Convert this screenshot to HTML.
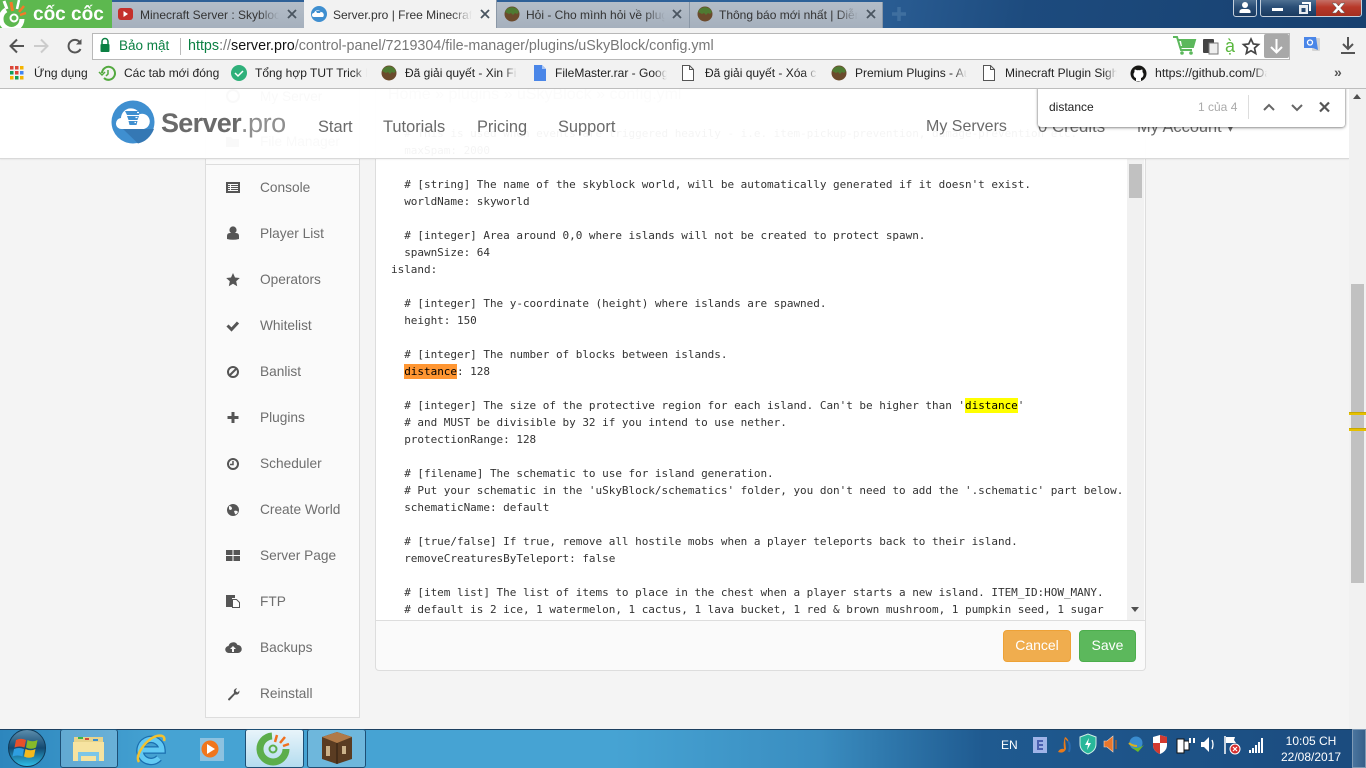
<!DOCTYPE html>
<html lang="vi"><head><meta charset="utf-8"><title>Server.pro</title>
<style>
html,body{margin:0;padding:0;width:1366px;height:768px;overflow:hidden;background:#f4f4f4;font-family:"Liberation Sans","Noto Sans CJK SC",sans-serif;color:#333}
.a,.t{position:absolute}
.t{white-space:nowrap;line-height:16px}
.tab{position:absolute;top:2px;height:26px;width:193px;background:linear-gradient(#b4bdc8,#a5b0bd);border-right:1px solid #8a97a6;box-sizing:border-box}
.tab.on{background:#f2f2f2;top:0;height:28px}
.tt{position:absolute;top:5px;height:16px;width:139px;font-size:12px;line-height:16px;white-space:nowrap;overflow:hidden;color:#333;-webkit-mask-image:linear-gradient(90deg,#000 85%,transparent);mask-image:linear-gradient(90deg,#000 85%,transparent)}
.bm{position:absolute;top:65px;height:16px;width:112px;font-size:12px;line-height:16px;white-space:nowrap;overflow:hidden;color:#222;-webkit-mask-image:linear-gradient(90deg,#000 88%,transparent);mask-image:linear-gradient(90deg,#000 88%,transparent)}
.si{position:absolute;left:260px;margin-top:1px;font-size:13.700px;line-height:18px;color:#6e6e6e;white-space:nowrap}
.nav{position:absolute;top:116px;font-size:16.400px;line-height:20px;color:#6a6a6a;white-space:nowrap}
pre{position:absolute;left:391px;top:125px;margin:0;width:736px;height:495px;overflow:hidden;font:11px/17px "DejaVu Sans Mono",monospace;letter-spacing:-.025px;color:#333}
svg{position:absolute;overflow:visible}
</style></head><body>

<!-- page layer -->
<div class="a" style="left:0;top:89px;width:1366px;height:640px;background:#f4f4f4"></div>
<!-- sidebar -->
<div class="a" style="left:205px;top:80px;width:155px;height:638px;background:#fafafa;border:1px solid #ddd;box-sizing:border-box"></div>
<div class="a" style="left:205px;top:164px;width:155px;height:1px;background:#ddd"></div>
<div class="si" style="top:87px;color:#888">My Server</div>
<div class="si" style="top:132px;color:#888">File Manager</div>
<div class="si" style="top:178px">Console</div>
<div class="si" style="top:224px">Player List</div>
<div class="si" style="top:270px">Operators</div>
<div class="si" style="top:316px">Whitelist</div>
<div class="si" style="top:362px">Banlist</div>
<div class="si" style="top:408px">Plugins</div>
<div class="si" style="top:454px">Scheduler</div>
<div class="si" style="top:500px">Create World</div>
<div class="si" style="top:546px">Server Page</div>
<div class="si" style="top:592px">FTP</div>
<div class="si" style="top:638px">Backups</div>
<div class="si" style="top:684px">Reinstall</div>
<svg width="1366" height="768" style="left:0;top:0" fill="#555">
<circle cx="233" cy="96" r="6" fill="none" stroke="#888" stroke-width="2"/>
<path d="M226 137h5l2 2h6v8h-13z" fill="#888"/>
<path d="M226 182h14v11h-14z"/><path d="M228 184h10v7h-10z" fill="#fafafa"/><path d="M228 185h2v1h-2zM231 185h7v1h-7zM228 187h2v1h-2zM231 187h7v1h-7zM228 189h2v1h-2zM231 189h7v1h-7z"/>
<circle cx="233" cy="230" r="3.600"/><path d="M227 239v-3q0-3 3-3h6q3 0 3 3v3q-6 1.500-12 0z"/>
<path d="M233 273l2 4.500 4.800.5-3.600 3.300 1 4.900-4.200-2.500-4.200 2.500 1-4.900-3.600-3.300 4.800-.5z"/>
<path d="M227.500 325.500l4 4 6.500-7" fill="none" stroke="#555" stroke-width="3"/>
<circle cx="233" cy="372" r="5" fill="none" stroke="#555" stroke-width="2"/><path d="M229.500 375.500l7-7" stroke="#555" stroke-width="2"/>
<path d="M231.500 412h3v4h4v3h-4v4h-3v-4h-4v-3h4z"/>
<circle cx="233" cy="464" r="5" fill="none" stroke="#555" stroke-width="2"/><path d="M233 461v3.500h-3" fill="none" stroke="#555" stroke-width="1.500"/>
<circle cx="233" cy="510" r="6"/><path d="M229 506q3 0 3 3-2 2-3 0zM234 511q3-1 4 1-2 3-3 2z" fill="#fafafa"/>
<path d="M226 550h6.500v5h-6.500zM233.500 550h6.500v5h-6.500zM226 556h6.500v5h-6.500zM233.500 556h6.500v5h-6.500z"/>
<path d="M226 595h9v3h-3v9h-6z"/><path d="M232.500 599.500h4l3 3v5h-7z" fill="#fff" stroke="#555"/>
<path d="M229 653a3.500 3.500 0 0 1-.5-7 4.800 4.800 0 0 1 9-1 4 4 0 0 1 .5 8z"/><path d="M233 646l3 3h-2v3h-2v-3h-2z" fill="#fafafa"/>
<path d="M228 699l6-6q-1-4 3-5l-1.500 3 2 1.500 2-2q0 5-4.500 4l-5.500 6q-1.500 0-1.500-1.500z"/>
</svg>

<!-- editor panel -->
<div class="a" style="left:375px;top:80px;width:771px;height:591px;background:#fafafa;border:1px solid #ddd;box-sizing:border-box;border-radius:0 0 4px 4px"></div>
<div class="a" style="left:376px;top:80px;width:751px;height:540px;background:#fff"></div>
<div class="a" style="left:1127px;top:80px;width:17px;height:540px;background:#f1f1f1"></div>
<div class="a" style="left:376px;top:620px;width:769px;height:1px;background:#ddd"></div>
<div class="a" style="left:1129px;top:164px;width:13px;height:34px;background:#c1c1c1"></div>
<svg width="10" height="6" style="left:1131px;top:607px"><path d="M0 0h8l-4 5z" fill="#505050"/></svg>
<div class="t" style="left:388px;top:86px;font-size:16px;line-height:18px;color:#aaa">Home » plugins » uSkyBlock » config.yml</div>
<pre>  # This is used when events are triggered heavily - i.e. item-pickup-prevention, damage-prevention etc.
  maxSpam: 2000

  # [string] The name of the skyblock world, will be automatically generated if it doesn't exist.
  worldName: skyworld

  # [integer] Area around 0,0 where islands will not be created to protect spawn.
  spawnSize: 64
island:

  # [integer] The y-coordinate (height) where islands are spawned.
  height: 150

  # [integer] The number of blocks between islands.
  <span style="background:#ff9632;color:#000;padding:1px 0">distance</span>: 128

  # [integer] The size of the protective region for each island. Can't be higher than '<span style="background:#ff0;color:#000;padding:1px 0">distance</span>'
  # and MUST be divisible by 32 if you intend to use nether.
  protectionRange: 128

  # [filename] The schematic to use for island generation.
  # Put your schematic in the 'uSkyBlock/schematics' folder, you don't need to add the '.schematic' part below.
  schematicName: default

  # [true/false] If true, remove all hostile mobs when a player teleports back to their island.
  removeCreaturesByTeleport: false

  # [item list] The list of items to place in the chest when a player starts a new island. ITEM_ID:HOW_MANY.
  # default is 2 ice, 1 watermelon, 1 cactus, 1 lava bucket, 1 red &amp; brown mushroom, 1 pumpkin seed, 1 sugar</pre>
<div class="a" style="left:1003px;top:630px;width:68px;height:32px;background:#f0ad4e;border-radius:4px;border:1px solid #eea236;box-sizing:border-box;color:#fff;font-size:14px;line-height:29px;text-align:center">Cancel</div>
<div class="a" style="left:1079px;top:630px;width:57px;height:32px;background:#5cb85c;border-radius:4px;border:1px solid #4cae4c;box-sizing:border-box;color:#fff;font-size:14px;line-height:29px;text-align:center">Save</div>

<!-- sticky nav -->
<div class="a" style="left:0;top:89px;width:1349px;height:69px;background:rgba(255,255,255,.95);border-bottom:1px solid #d9d9d9;box-shadow:0 1px 1px rgba(0,0,0,.05)"></div>
<svg width="44" height="44" style="left:111px;top:100px" viewBox="0 0 44 44">
<circle cx="22" cy="22" r="21.500" fill="#3f8fd0"/>
<path d="M12 29L27 43.500Q38 41 43 29z" fill="#3578b4"/>
<path d="M11 29a5.500 5.500 0 0 1-1-11 10 10 0 0 1 19-4 7.500 7.500 0 0 1 4 15z" fill="#fff"/>
<path d="M14 11h16l-2 4H16zM16 16h12l-1.500 4h-9zM17.500 21h9l-1 4h-7z" fill="#3f8fd0"/>
<path d="M26 12.500h2M24.500 17.500h2M23.500 22.500h1.500" stroke="#fff" stroke-width="1.200"/>
</svg>
<div class="t" style="left:161px;top:107px;font-size:27px;line-height:32px;font-weight:bold;color:#6a6a6a;letter-spacing:-.7px">Server<span style="font-weight:normal;color:#8f8f8f;letter-spacing:-.4px">.pro</span></div>
<div class="nav" style="left:318px;top:117px">Start</div>
<div class="nav" style="left:383px;top:117px">Tutorials</div>
<div class="nav" style="left:477px;top:117px">Pricing</div>
<div class="nav" style="left:558px;top:117px">Support</div>
<div class="nav" style="left:926px;top:117px;font-size:16px">My Servers</div>
<div class="nav" style="left:1038px;top:117px;font-size:16.800px">0 Credits</div>
<div class="nav" style="left:1137px;top:117px">My Account ▾</div>

<!-- page scrollbar -->
<div class="a" style="left:1349px;top:89px;width:17px;height:640px;background:#f1f1f1"></div>
<div class="a" style="left:1351px;top:284px;width:13px;height:299px;background:#c1c1c1"></div>
<div class="a" style="left:1349px;top:412px;width:17px;height:3px;background:#e6c000;border-top:1px solid #c8a800;box-sizing:border-box"></div>
<div class="a" style="left:1349px;top:428px;width:17px;height:3px;background:#e6c000;border-top:1px solid #c8a800;box-sizing:border-box"></div>
<svg width="10" height="6" style="left:1353px;top:94px"><path d="M0 5h8L4 0z" fill="#505050"/></svg>

<!-- find bar -->
<div class="a" style="left:1038px;top:87px;width:307px;height:40px;background:#fff;border-radius:0 0 3px 3px;box-shadow:0 0 2px rgba(0,0,0,.45),0 1px 3px rgba(0,0,0,.3)"></div>
<div class="t" style="left:1049px;top:99px;font-size:12px;color:#222">distance</div>
<div class="t" style="left:1198px;top:99px;font-size:12px;color:#aaa">1 của 4</div>
<div class="a" style="left:1248px;top:95px;width:1px;height:24px;background:#ddd"></div>
<svg width="100" height="20" style="left:1260px;top:98px" fill="none" stroke="#666" stroke-width="2">
<path d="M4 12l5-5 5 5M32 7l5 5 5-5"/><path d="M60 4.500l9 9M69 4.500l-9 9" stroke="#555" stroke-width="2.200"/>
</svg>

<!-- tab strip -->
<div class="a" style="left:0;top:0;width:1366px;height:28px;background:linear-gradient(100deg,#2f5f96 0%,#2d6198 62%,#1d4b7e 75%,#17406f 100%)"></div>
<div class="a" style="left:0;top:0;width:112px;height:28px;background:#5db84f"></div>
<svg width="32" height="28" style="left:0;top:0" fill="none">
<path d="M6 10a10.500 10.500 0 1 0 16 9" stroke="#fff" stroke-width="5"/>
<circle cx="14" cy="18" r="3.500" fill="#5db84f" stroke="#fff" stroke-width="2"/>
<path d="M4 1l3 8" stroke="#fff" stroke-width="3"/><path d="M11 2l1.500 9" stroke="#f47a28" stroke-width="3"/><path d="M19 0l-2 9" stroke="#fff" stroke-width="2.500"/><path d="M24 6l-5 6M26 13l-6 2" stroke="#f47a28" stroke-width="2.500"/>
</svg>
<div class="t" style="left:33px;top:4px;font-size:19px;line-height:22px;font-weight:bold;color:#fff">cốc cốc</div>

<div class="tab" style="left:112px"></div>
<div class="tab on" style="left:304px"></div>
<div class="tab" style="left:497px"></div>
<div class="tab" style="left:690px"></div>
<div class="tt" style="left:140px;top:7px">Minecraft Server : Skyblock</div>
<div class="tt" style="left:333px;top:7px">Server.pro | Free Minecraft</div>
<div class="tt" style="left:526px;top:7px">Hỏi - Cho mình hỏi về plugin</div>
<div class="tt" style="left:719px;top:7px">Thông báo mới nhất | Diễn</div>
<svg width="1366" height="28" style="left:0;top:0">
<rect x="118" y="8" width="15" height="12" rx="3" fill="#c4302b"/><path d="M123.500 11l4.500 3-4.500 3z" fill="#fff"/>
<circle cx="319" cy="14" r="8" fill="#3f8fd0"/><path d="M314 17a2 2 0 0 1 0-4 4 4 0 0 1 7-1 3 3 0 0 1 2 5z" fill="#fff"/><path d="M316 11h5l-1 2h-3z" fill="#3f8fd0"/>
<circle cx="512" cy="14" r="7.500" fill="#6b4a2c"/><path d="M505 12a7.500 7.500 0 0 1 14 0l-2 2-2-1-2 2-2-2-2 1-2-1z" fill="#4f7a32"/>
<circle cx="705" cy="14" r="7.500" fill="#6b4a2c"/><path d="M698 12a7.500 7.500 0 0 1 14 0l-2 2-2-1-2 2-2-2-2 1-2-1z" fill="#4f7a32"/>
<g stroke="#4a5560" stroke-width="1.800"><path d="M288 10l8 8M296 10l-8 8M481 10l8 8M489 10l-8 8M673 10l8 8M681 10l-8 8M867 10l8 8M875 10l-8 8"/></g>
<path d="M899 7v14M892 14h14" stroke="#3f6f9f" stroke-width="3.500"/>
</svg>

<!-- window controls -->
<div class="a" style="left:1233px;top:-3px;width:24px;height:20px;border:1px solid #c5d0dc;border-radius:3px;background:linear-gradient(#5a7a9a,#2a4e76 50%,#1a3a60);box-sizing:border-box"></div>
<div class="a" style="left:1260px;top:-3px;width:102px;height:20px;border:1px solid #c5d0dc;border-radius:3px;background:linear-gradient(#5a7a9a,#2a4e76 50%,#1a3a60);box-sizing:border-box"></div>
<div class="a" style="left:1316px;top:-2px;width:45px;height:18px;background:linear-gradient(#c98078,#b8392a 50%,#a52f20);border-radius:0 0 3px 0"></div>
<svg width="140" height="18" style="left:1228px;top:0" fill="#fff">
<circle cx="17" cy="5" r="3"/><path d="M11.500 13v-2q1-2 3-2h5q2 0 3 2v2z"/>
<path d="M44 8h11v3H44z"/>
<path d="M71 5h9v9h-9zM73.500 8h4v4h-4z" fill-rule="evenodd" opacity=".9"/><path d="M74 2h9v9h-2V4h-7z"/>
<path d="M104 3h4l2.500 3 2.500-3h4l-4.500 5 4.500 5h-4l-2.500-3-2.500 3h-4l4.500-5z" stroke="#555" stroke-width=".5"/>
</svg>

<!-- toolbar -->
<div class="a" style="left:0;top:28px;width:1366px;height:60px;background:#f2f2f2"></div>
<div class="a" style="left:0;top:88px;width:1366px;height:1px;background:#bdbdbd"></div>
<div class="a" style="left:92px;top:33px;width:1198px;height:27px;background:#fff;border:1px solid #b8b8b8;box-sizing:border-box"></div>
<svg width="100" height="24" style="left:6px;top:34px" fill="none">
<path d="M18 12H5M11 5.500L4.500 12l6.500 6.500" stroke="#555" stroke-width="2"/>
<path d="M28 12h13M35 5.500l6.500 6.500-6.500 6.500" stroke="#ccc" stroke-width="2"/>
<path d="M74 8.500A6.300 6.300 0 1 0 74.500 15" stroke="#555" stroke-width="2"/><path d="M75.500 5v5.500H70z" fill="#555"/>
<path d="M96 11v-2.500a3 3 0 0 1 6 0V11" stroke="#0b8043" stroke-width="1.500" transform="translate(0 -1)"/><rect x="94.500" y="10" width="9" height="8" rx="1" fill="#0b8043"/>
</svg>
<div class="t" style="left:119px;top:38px;font-size:13.500px;color:#0b8043">Bảo mật</div>
<div class="a" style="left:180px;top:38px;width:1px;height:17px;background:#bbb"></div>
<div class="t" style="left:188px;top:38px;font-size:14.330px;color:#777"><span style="color:#0b8043">https</span>://<span style="color:#111">server.pro</span>/control-panel/7219304/file-manager/plugins/uSkyBlock/config.yml</div>
<svg width="190" height="30" style="left:1172px;top:32px">
<path d="M1 5h4l4 13h11M6 8h17l-2 7H8z" fill="none" stroke="#5cb85c" stroke-width="2"/><path d="M9 9h13l-1.500 5H10z" fill="#5cb85c"/><circle cx="10" cy="21" r="1.800" fill="#5cb85c"/><circle cx="19" cy="21" r="1.800" fill="#5cb85c"/>
<rect x="31" y="7" width="11" height="14" rx="1" fill="#444"/><rect x="37" y="11" width="9" height="11" fill="#eee" stroke="#777"/>
<text x="53" y="20" font-size="18" fill="#5bb83f" font-family="Liberation Sans,sans-serif">ạ̀</text>
<path d="M79 7l2.300 5 5.200.5-4 3.600 1.200 5.400-4.700-2.800-4.700 2.800 1.200-5.400-4-3.600 5.200-.5z" fill="none" stroke="#444" stroke-width="1.700"/>
<rect x="92" y="2" width="25" height="24" rx="2" fill="#a8a8a8"/>
<path d="M104.500 7v13M99 15l5.500 5.500L110 15" fill="none" stroke="#fff" stroke-width="2"/>
<rect x="140" y="6" width="8" height="13" rx="1" fill="#d4d4d4"/><path d="M132 5h12l2 13-5-2h-9z" fill="#4a86e8"/><circle cx="138" cy="10.500" r="2.500" fill="none" stroke="#fff" stroke-width="1.300"/>
<path d="M176 5v12M171 12l5 5 5-5" fill="none" stroke="#555" stroke-width="2"/><path d="M169 21h14" stroke="#555" stroke-width="2"/>
</svg>

<!-- bookmarks -->
<svg width="16" height="16" style="left:10px;top:66px">
<rect width="3.500" height="3.500" fill="#db4437"/><rect x="5" width="3.500" height="3.500" fill="#db4437"/><rect x="10" width="3.500" height="3.500" fill="#f4b400"/>
<rect y="5" width="3.500" height="3.500" fill="#0f9d58"/><rect x="5" y="5" width="3.500" height="3.500" fill="#db4437"/><rect x="10" y="5" width="3.500" height="3.500" fill="#4285f4"/>
<rect y="10" width="3.500" height="3.500" fill="#f4b400"/><rect x="5" y="10" width="3.500" height="3.500" fill="#0f9d58"/><rect x="10" y="10" width="3.500" height="3.500" fill="#f4b400"/>
</svg>
<div class="bm" style="left:34px;width:56px;-webkit-mask-image:none;mask-image:none">Ứng dụng</div>
<svg width="20" height="20" style="left:98px;top:64px" fill="none"><path d="M4 9a6.500 6.500 0 1 1 2 5" stroke="#53a93f" stroke-width="2"/><path d="M1 8l3 3 3-3" stroke="#53a93f" stroke-width="1.500"/><path d="M10 6v4l-2 2" stroke="#53a93f" stroke-width="1.500"/></svg>
<div class="bm" style="left:124px;width:98px;-webkit-mask-image:none;mask-image:none">Các tab mới đóng</div>
<svg width="18" height="18" style="left:230px;top:65px"><circle cx="9" cy="8" r="8" fill="#2fb07a"/><path d="M5 8l3 3 5-5" fill="none" stroke="#fff" stroke-width="1.500"/></svg>
<div class="bm" style="left:255px">Tổng hợp TUT Trick Fix</div>
<svg width="18" height="18" style="left:380px;top:65px"><circle cx="9" cy="8" r="7.500" fill="#6b4a2c"/><path d="M2 6a7.500 7.500 0 0 1 14 0l-2 2-2-1-2 2-2-2-2 1-2-1z" fill="#4f7a32"/></svg>
<div class="bm" style="left:405px">Đã giải quyết - Xin File</div>
<svg width="14" height="18" style="left:533px;top:65px"><path d="M1 0h8l4 4v12H1z" fill="#4a86e8"/><path d="M9 0v4h4z" fill="#a9c6f5"/></svg>
<div class="bm" style="left:555px">FileMaster.rar - Google</div>
<svg width="14" height="18" style="left:681px;top:65px"><path d="M1.500.500h7l4 4v11h-11zM8.500.500v4h4" fill="#fff" stroke="#555"/></svg>
<div class="bm" style="left:705px">Đã giải quyết - Xóa cho</div>
<svg width="18" height="18" style="left:830px;top:65px"><circle cx="9" cy="8" r="7.500" fill="#6b4a2c"/><path d="M2 6a7.500 7.500 0 0 1 14 0l-2 2-2-1-2 2-2-2-2 1-2-1z" fill="#4f7a32"/></svg>
<div class="bm" style="left:855px">Premium Plugins - Auto</div>
<svg width="14" height="18" style="left:982px;top:65px"><path d="M1.500.500h7l4 4v11h-11zM8.500.500v4h4" fill="#fff" stroke="#555"/></svg>
<div class="bm" style="left:1005px">Minecraft Plugin Sight</div>
<svg width="18" height="18" style="left:1130px;top:65px"><circle cx="8.500" cy="8.500" r="8" fill="#161614"/><path d="M6 16v-3q-2-.5-2.500-3 0-2 1-3-.3-1.500.3-2.500 1.200 0 2.200.8 1.500-.4 3 0 1-.8 2.200-.8.600 1 .3 2.500 1 1 1 3-.5 2.500-2.500 3v3z" fill="#fff"/></svg>
<div class="bm" style="left:1155px;font-size:12.300px">https://github.com/Daniel</div>
<div class="t" style="left:1334px;top:64px;font-size:14px;font-weight:bold;color:#555">»</div>

<!-- taskbar -->
<div class="a" style="left:0;top:729px;width:1366px;height:39px;background:linear-gradient(90deg,#2d86bd 0,#46a3d3 12%,#46a3d3 45%,#3a8dc0 60%,#1f5a90 72%,#1b4b7e 100%);border-top:1px solid #1c3f60;box-sizing:border-box"></div>
<div class="a" style="left:60px;top:729px;width:58px;height:39px;background:rgba(255,255,255,.22);border:1px solid #1d4f75;border-radius:3px;box-sizing:border-box"></div>
<div class="a" style="left:245px;top:729px;width:59px;height:39px;background:linear-gradient(#e8f4fa,#b4dcef);border:1px solid #1d4f75;border-radius:3px;box-sizing:border-box"></div>
<div class="a" style="left:307px;top:729px;width:59px;height:39px;background:rgba(255,255,255,.22);border:1px solid #1d4f75;border-radius:3px;box-sizing:border-box"></div>
<svg width="1366" height="39" style="left:0;top:729px">
<defs><linearGradient id="orb" x1="0" y1="0" x2="0" y2="1"><stop offset="0" stop-color="#5e8fae"/><stop offset=".5" stop-color="#134a72"/><stop offset="1" stop-color="#2fc0ea"/></linearGradient></defs>
<circle cx="27" cy="19" r="18.500" fill="url(#orb)" stroke="#0f3a58"/>
<path d="M16 11q5-2.500 10 0l-1.500 7.500q-5-2-10 0z" fill="#e8502a"/><path d="M27.500 11q5 2.500 10 0l-1.500 7.500q-5 2.500-10 0z" fill="#86ba2a"/><path d="M14 20q5-2 10 0l-1.500 7.500q-5-2-10 0z" fill="#2e9ee0"/><path d="M25.500 20q5 2.500 10 0l-1.500 7.500q-5 2.500-10 0z" fill="#f5b91c"/>
<path d="M74 8h29v8H74z" fill="#e8d48c"/><path d="M73 13h31v19H73z" fill="#f6e3a0"/><path d="M78 8h5v2h-5z" fill="#3bb54a"/><path d="M85 9h4v2h-4z" fill="#d24a3a"/><path d="M93 10h5v2h-5z" fill="#3a8fd0"/><path d="M78 23h21v9h-3v-5H81v5h-3z" fill="#7cc6e8"/>
<path d="M142 21h20a11 11 0 1 0-3 8" fill="none" stroke="#1b6fb0" stroke-width="7.500"/>
<path d="M142 21h20a11 11 0 1 0-3 8" fill="none" stroke="#62c9f3" stroke-width="5"/>
<path d="M139 33c-4-6 4-18 13-24 7-4 14-3 12 3" fill="none" stroke="#f2c230" stroke-width="2.500"/>
<rect x="200" y="9" width="24" height="23" fill="#9fc9e4" opacity=".8"/><circle cx="210" cy="20" r="8.500" fill="#f0761c"/><path d="M207 15l8 5-8 5z" fill="#fff"/>
<path d="M272 6a13 13 0 1 0 14 13" fill="none" stroke="#5cae4b" stroke-width="7" transform="translate(0 1)"/><circle cx="273" cy="20" r="3.500" fill="none" stroke="#5cae4b" stroke-width="2"/><path d="M277 6l-2 7M285 8l-5 6M289 15l-6 2" stroke="#f0701e" stroke-width="2.500"/>
<path d="M337 3l15 5v22l-15 5-15-5V8z" fill="#5a3c22"/><path d="M322 8l15-5 15 5-15 6z" fill="#b07a48"/><path d="M326 17h4v10h-4zM342 17h4v8h-4z" fill="#cbb28a"/><path d="M337 14v21" stroke="#2e1e10"/>
<path d="M1033 8h14v16h-14z" fill="#9fb4e8"/><path d="M1037 11h6v2h-4v2h4v2h-4v2h4v2h-6z" fill="#4a60b0"/>
<path d="M1058 23q6 2 8-3l-1-10q3 2 5 6-2-7-5-8-2 5-1 12-4-1-6 3z" fill="#e87a1a"/><path d="M1068 12q3 4 1 11" stroke="#2a6bb0" stroke-width="2" fill="none"/>
<path d="M1080 8l8-3 8 3v7q0 7-8 10-8-3-8-10z" fill="#28b79a" stroke="#cfeee6"/><path d="M1089 9l-4 7h3l-1 5 4-7h-3z" fill="#fff"/>
<path d="M1104 12h3l6-5v16l-6-5h-3z" fill="#e8762c" stroke="#f2d8c4" stroke-width=".6"/><path d="M1116 11v9" stroke="#a05c2c" stroke-width="1.500"/>
<circle cx="1136" cy="14" r="6.500" fill="#3a8ccf"/><path d="M1128 16q7 6 16 0l-6 7z" fill="#6ab82c"/><path d="M1129 14q3 3 8 3" stroke="#d8b020" stroke-width="2" fill="none"/>
<path d="M1153 8l7-2 7 2v8q0 6-7 9-7-3-7-9z" fill="#fff"/><path d="M1160 6l7 2v6h-7zM1153 14h7v11q-7-3-7-9z" fill="#d23a30"/>
<path d="M1177 10h7v14h-7zM1184 12h5v9h-5z" fill="#fff" stroke="#111"/><path d="M1190 9v5M1194 9v5" stroke="#fff" stroke-width="2"/>
<path d="M1201 13h3l5-5v15l-5-5h-3z" fill="#fff"/><path d="M1212 11q2 4.500 0 9" stroke="#fff" fill="none" stroke-width="1.300"/>
<path d="M1225 7v18" stroke="#fff" stroke-width="1.500"/><path d="M1226 8h9l-1 3 2 3h-10z" fill="#fff"/><circle cx="1235" cy="20" r="5" fill="#d63030" stroke="#fff"/><path d="M1233 18l4 4M1237 18l-4 4" stroke="#fff" stroke-width="1.200"/>
<path d="M1249 21h2v3h-2zM1252 19h2v5h-2zM1255 16h2v8h-2zM1258 13h2v11h-2zM1261 9h2v15h-2z" fill="#fff"/>
</svg>
<div class="t" style="left:1001px;top:737px;font-size:12px;color:#fff">EN</div>
<div class="t" style="left:1280px;top:733px;width:62px;text-align:center;font-size:12px;color:#fff">10:05 CH</div>
<div class="t" style="left:1275px;top:749px;width:72px;text-align:center;font-size:12px;color:#fff">22/08/2017</div>
<div class="a" style="left:1352px;top:729px;width:14px;height:39px;background:linear-gradient(90deg,#4a759e,#375f89);border:1px solid #7f9ab5;box-sizing:border-box"></div>
</body></html>
